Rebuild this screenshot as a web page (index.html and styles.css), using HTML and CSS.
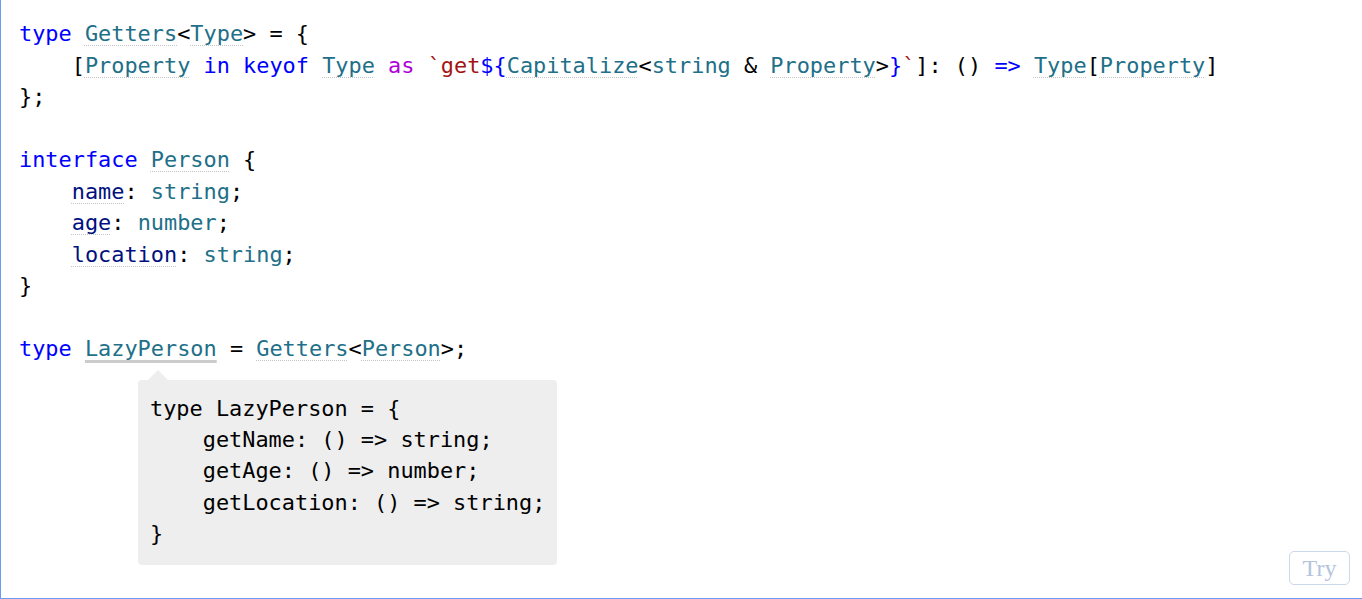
FILE: index.html
```html
<!DOCTYPE html>
<html>
<head>
<meta charset="utf-8">
<link rel="stylesheet" href="styles.css">
</head>
<body>
<div class="frame">
<pre class="code"><span class="kw">type</span> <span class="ty ref">Getters</span>&lt;<span class="ty ref">Type</span>&gt; = {
    [<span class="ty ref">Property</span> <span class="kw">in</span> <span class="kw">keyof</span> <span class="ty ref">Type</span> <span class="ctl">as</span> <span class="str">`get</span><span class="kw">${</span><span class="ty ref">Capitalize</span>&lt;<span class="ty">string</span> &amp; <span class="ty ref">Property</span>&gt;<span class="kw">}</span><span class="str">`</span>]: () <span class="kw">=&gt;</span> <span class="ty ref">Type</span>[<span class="ty ref">Property</span>]
};

<span class="kw">interface</span> <span class="ty ref">Person</span> {
    <span class="prop ref">name</span>: <span class="ty">string</span>;
    <span class="prop ref">age</span>: <span class="ty">number</span>;
    <span class="prop ref">location</span>: <span class="ty">string</span>;
}

<span class="kw">type</span> <span class="ty hover">LazyPerson</span> = <span class="ty ref">Getters</span>&lt;<span class="ty ref">Person</span>&gt;;</pre>
<div class="tip">
<pre class="tip-code">type LazyPerson = {
    getName: () =&gt; string;
    getAge: () =&gt; number;
    getLocation: () =&gt; string;
}</pre>
</div>
<button class="try">Try</button>
</div>
</body>
</html>
```
FILE: styles.css
```css
html, body {
  margin: 0;
  padding: 0;
  background: #fff;
}

.frame {
  position: relative;
  height: 598px;
  border-left: 1px solid #6a9bf8;
  border-bottom: 1px solid #6a9bf8;
  box-sizing: content-box;
}

.code {
  margin: 0;
  padding: 18px 0 0 18px;
  font-family: "DejaVu Sans Mono", monospace;
  font-size: 21.9px;
  line-height: 31.5px;
  color: #000;
}

.kw { color: #0000ff; }
.ty { color: #216f88; }
.prop { color: #001080; }
.ctl { color: #af00db; }
.str { color: #a31515; }

.ref {
  text-decoration: underline dotted #c4c4c4 1px;
  text-underline-offset: 4px;
  text-decoration-skip-ink: none;
}

.hover {
  text-decoration: underline solid #cccccc 3px;
  text-underline-offset: 4px;
  text-decoration-skip-ink: none;
}

.tip {
  position: absolute;
  left: 137px;
  top: 380px;
  width: 419px;
  height: 185px;
  box-sizing: border-box;
  background: #eeeeee;
  border-radius: 4px;
  padding: 13px 0 0 12px;
}

.tip::before {
  content: "";
  position: absolute;
  left: 10px;
  top: -10px;
  border-left: 10px solid transparent;
  border-right: 10px solid transparent;
  border-bottom: 10px solid #eeeeee;
}

.tip-code {
  margin: 0;
  font-family: "DejaVu Sans Mono", monospace;
  font-size: 21.9px;
  line-height: 31.2px;
  color: #000;
}

.try {
  position: absolute;
  left: 1288px;
  top: 551px;
  width: 61px;
  height: 34px;
  background: #fff;
  border: 1px solid #cbd8ea;
  border-radius: 5px;
  color: #b3c4dc;
  font-family: "Liberation Serif", serif;
  font-size: 24px;
  padding: 0;
}
```
